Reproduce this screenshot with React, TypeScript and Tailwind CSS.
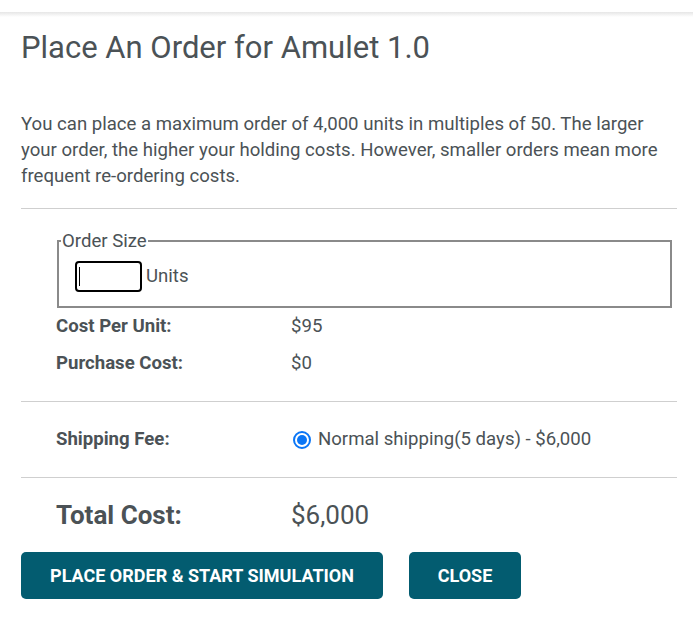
import React from 'react';

export default function App() {
  return (
    <div className="min-h-[637px] w-[693px] bg-white text-[#4b5256]" style={{ fontFamily: 'Roboto, "Liberation Sans", sans-serif' }}>
      {/* top shadow edge */}
      <div className="h-[12px] bg-white" />
      <div className="h-[5px] bg-gradient-to-b from-[#e6e6e6] to-white" />

      <div className="pl-[21px] pr-[16px]">
        <h1 className="mt-[13px] text-[31px] leading-[36px] font-normal">Place An Order for Amulet 1.0</h1>

        <p className="mt-[45px] text-[18.6px] leading-[26px]">
          You can place a maximum order of 4,000 units in multiples of 50. The larger your order, the higher your holding costs. However, smaller orders mean more frequent re-ordering costs.
        </p>

        <hr className="mt-[19px] border-t border-[#cfcfcf]" />

        {/* order size */}
        <fieldset className="mt-[22px] ml-[36px] mr-[5px] h-[77px] border-2 border-[#8a8a8a] px-[2px] pt-0">
          <legend className="text-[18.6px] leading-[20px] px-[1px]">Order Size</legend>
          <div className="mt-[10px] ml-[14px] flex items-center gap-[4px]">
            <div className="flex h-[31px] w-[67px] items-center rounded-[4px] border-2 border-black px-[2px]">
              <span className="h-[19px] w-px bg-black" />
            </div>
            <span className="text-[18.6px]">Units</span>
          </div>
        </fieldset>

        <div className="ml-[35px] mt-[8px] flex flex-col gap-[17px] text-[18.6px] leading-[20px]">
          <div className="flex">
            <span className="w-[235px] font-bold">Cost Per Unit:</span>
            <span>$95</span>
          </div>
          <div className="flex">
            <span className="w-[235px] font-bold">Purchase Cost:</span>
            <span>$0</span>
          </div>
        </div>

        <hr className="mt-[28px] border-t border-[#cfcfcf]" />

        <div className="ml-[35px] flex h-[75px] items-center text-[18.6px]">
          <span className="w-[237px] font-bold">Shipping Fee:</span>
          <span className="flex h-[18px] w-[18px] items-center justify-center rounded-full border-2 border-[#0a76f6]">
            <span className="h-[10px] w-[10px] rounded-full bg-[#0a76f6]" />
          </span>
          <span className="ml-[7px]">Normal shipping(5 days) - $6,000</span>
        </div>

        <hr className="border-t border-[#cfcfcf]" />

        <div className="ml-[35px] mt-[22px] flex text-[26px] leading-[30px]">
          <span className="w-[235px] font-bold">Total Cost:</span>
          <span>$6,000</span>
        </div>

        <div className="mt-[22px] flex gap-[26px]">
          <button className="h-[47px] w-[362px] rounded-[5px] bg-[#035c70] text-[18px] font-bold text-white">
            PLACE ORDER &amp; START SIMULATION
          </button>
          <button className="h-[47px] w-[112px] rounded-[5px] bg-[#035c70] text-[18px] font-bold text-white">
            CLOSE
          </button>
        </div>
      </div>
    </div>
  );
}
